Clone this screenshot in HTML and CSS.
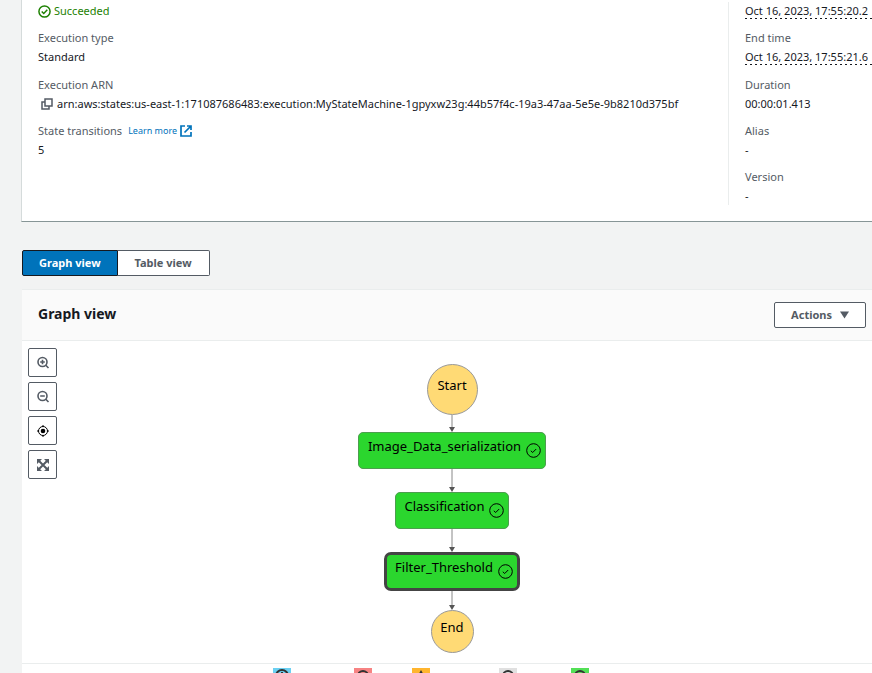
FILE: index.html
```html
<!DOCTYPE html>
<html lang="en">
<head>
<meta charset="utf-8">
<title>Execution details</title>
<link rel="stylesheet" href="styles.css">
</head>
<body>
<svg class="defs" aria-hidden="true">
  <symbol id="check" viewBox="0 0 15 15"><circle cx="7.500" cy="7.500" r="6.800"/><path d="M4.800 7.800l1.900 1.700L10.200 6"/></symbol>
</svg>
<main class="page">
  <section class="details">
    <dl class="column">
      <div class="field"><dd class="status"><svg class="status-icon" viewBox="0 0 14 14"><circle cx="7" cy="7" r="6"/><path d="M4 7l2.200 2.200 3.800-4"/></svg>Succeeded</dd></div>
      <div class="field timed"><dt>Execution type</dt><dd>Standard</dd></div>
      <div class="field"><dt>Execution ARN</dt><dd class="arn"><button class="copy" aria-label="Copy ARN"><svg viewBox="0 0 12 12"><path d="M4 1h7v7H4zM4 4H1v7h7V8"/></svg></button>arn:aws:states:us-east-1:171087686483:execution:MyStateMachine-1gpyxw23g:44b57f4c-19a3-47aa-5e5e-9b8210d375bf</dd></div>
      <div class="field"><dt>State transitions <a class="learn" href="#">Learn more<svg viewBox="0 0 12 12"><path d="M5 1H1v10h10V7M7 1h4v4M11 1L4.500 7.500"/></svg></a></dt><dd>5</dd></div>
    </dl>
    <dl class="column times">
      <div class="field"><dd><span class="dotted">Oct 16, 2023, 17:55:20.2</span></dd></div>
      <div class="field timed"><dt>End time</dt><dd><span class="dotted">Oct 16, 2023, 17:55:21.6</span></dd></div>
      <div class="field"><dt>Duration</dt><dd>00:00:01.413</dd></div>
      <div class="field"><dt>Alias</dt><dd>-</dd></div>
      <div class="field"><dt>Version</dt><dd>-</dd></div>
    </dl>
  </section>

  <div class="views">
    <button class="view active" aria-pressed="true">Graph view</button>
    <button class="view" aria-pressed="false">Table view</button>
  </div>

  <section class="graph-panel">
    <header class="panel-head">
      <h2>Graph view</h2>
      <button class="actions">Actions <svg viewBox="0 0 9 8"><path d="M0 0.500h9L4.500 7.500z"/></svg></button>
    </header>
    <div class="canvas">
      <div class="tools">
        <button aria-label="Zoom in"><svg viewBox="0 0 14 14"><circle cx="6.500" cy="6" r="4.500"/><path d="M9.800 9.200l2.700 2.800M6.500 3.700v4.600M4.200 6h4.600"/></svg></button>
        <button aria-label="Zoom out"><svg viewBox="0 0 14 14"><circle cx="6.500" cy="6" r="4.500"/><path d="M9.800 9.200l2.700 2.800M4.200 6h4.600"/></svg></button>
        <button aria-label="Center" class="center"><svg viewBox="0 0 14 14"><circle cx="7" cy="7" r="4.500"/><circle class="dot" cx="7" cy="7" r="2.300"/><path d="M7 1v2M7 11v2M1 7h2M11 7h2"/></svg></button>
        <button aria-label="Fit to screen" class="fit"><svg viewBox="0 0 14 14"><path d="M2 2l10 10M12 2L2 12"/><path class="solid" d="M1 1h5L1 6zM13 1v5L8 1zM1 13V8l5 5zM13 13H8l5-5z"/></svg></button>
      </div>
      <div class="flow">
        <div class="terminal start">Start</div>
        <svg class="edge short" viewBox="0 0 8 17"><path d="M4 0v12"/><path class="head" d="M1 12h6L4 17z"/></svg>
        <div class="node">Image_Data_serialization<svg><use href="#check"/></svg></div>
        <svg class="edge" viewBox="0 0 8 23"><path d="M4 0v18"/><path class="head" d="M1 18h6l-3 5z"/></svg>
        <div class="node">Classification<svg><use href="#check"/></svg></div>
        <svg class="edge" viewBox="0 0 8 23"><path d="M4 0v18"/><path class="head" d="M1 18h6l-3 5z"/></svg>
        <div class="node selected">Filter_Threshold<svg><use href="#check"/></svg></div>
        <svg class="edge last" viewBox="0 0 8 19"><path d="M4 0v14"/><path class="head" d="M1 14h6l-3 5z"/></svg>
        <div class="terminal end">End</div>
      </div>
    </div>
    <footer class="legend">
      <span><i class="swatch progress"><svg viewBox="0 0 16 16"><circle cx="8" cy="8" r="6"/><path d="M8 4v4h3"/></svg></i>In progress</span>
      <span><i class="swatch failed"><svg viewBox="0 0 16 16"><circle cx="8" cy="8" r="5"/></svg></i>Failed</span>
      <span><i class="swatch caught"><svg viewBox="0 0 16 16"><path d="M8 4l5 9H3z"/></svg></i>Caught error</span>
      <span><i class="swatch canceled"><svg viewBox="0 0 16 16"><circle cx="8" cy="8" r="5"/></svg></i>Canceled</span>
      <span><i class="swatch success"><svg viewBox="0 0 16 16"><circle cx="8" cy="8" r="5"/></svg></i>Succeeded</span>
    </footer>
  </section>
</main>
</body>
</html>
```
FILE: styles.css
```css
* { box-sizing: border-box; }
html, body { height: 100%; overflow: hidden; }
body {
  margin: 0;
  background: #f2f3f3;
  color: #16191f;
  font: 11px/18px "Noto Sans", sans-serif;
}
svg { display: block; fill: none; stroke: currentColor; flex: none; }
button { font: inherit; color: #545b64; cursor: pointer; }
dl, dd, h2 { margin: 0; }
.defs { display: none; }
.page { margin: 0 -10px 0 22px; }

.details {
  display: grid;
  grid-template-columns: 706px 1fr;
  margin-left: -1px;
  padding: 2px 0 16px;
  background: #fff;
  border-left: 1px solid #d5dbdb;
  border-bottom: 1px solid #879596;
}
.column { display: flex; flex-direction: column; gap: 8px; padding-left: 16px; white-space: nowrap; }
.times { border-left: 1px solid #eaeded; }
.field dt { display: flex; gap: 6px; line-height: 20px; color: #545b64; }
.field dd { height: 18px; }
.timed dd { height: 19px; }
.status { display: flex; align-items: center; gap: 3px; color: #1d8102; }
.status-icon { width: 13px; height: 13px; stroke-width: 1.6; }
.dotted {
  display: block;
  height: 17px;
  background: repeating-linear-gradient(90deg, #16191f 0 2px, transparent 2px 5px) bottom / 100% 1px no-repeat;
}
.arn { display: flex; align-items: center; gap: 4px; padding-left: 3px; }
.copy { padding: 0; border: 0; background: none; }
.copy svg { width: 12px; height: 12px; stroke-width: 1.5; }
.learn { display: flex; align-items: center; gap: 3px; font-size: 9px; color: #0073bb; text-decoration: none; }
.learn svg { width: 12px; height: 12px; stroke-width: 1.7; }

.views { display: flex; margin: 28px 0 13px; }
.view, .actions {
  height: 26px;
  padding: 0 16px;
  background: #fff;
  border: 1px solid #545b64;
  border-radius: 2px;
  font-weight: 700;
  line-height: 24px;
}
.view { padding: 0 17px; border-left: 0; border-radius: 0 2px 2px 0; }
.view.active { padding: 0 16px; background: #0073bb; border: 1px solid #16191f; border-radius: 2px 0 0 2px; color: #fff; }

.graph-panel { background: #fff; border-top: 1px solid #eaeded; }
.panel-head {
  display: flex;
  align-items: center;
  justify-content: space-between;
  height: 51px;
  padding: 0 16px;
  background: #fafafa;
  border-bottom: 1px solid #eaeded;
}
.panel-head h2 { font-size: 14px; line-height: 20px; padding-bottom: 2px; }
.actions { display: flex; align-items: center; gap: 8px; }
.actions svg { width: 9px; height: 8px; fill: currentColor; stroke: none; }

.canvas { position: relative; padding: 23px 0 10px; }
.tools { position: absolute; top: 7px; left: 6px; display: grid; gap: 5px; }
.tools button {
  display: grid;
  place-items: center;
  width: 29px;
  height: 29px;
  padding: 0;
  background: #fff;
  border: 1px solid #545b64;
  border-radius: 2px;
}
.tools svg { width: 14px; height: 14px; stroke-width: 1.6; }
.tools .center { color: #000; }
.tools .center svg { stroke-width: 1; }
.tools .fit svg { stroke-width: 2; }
.tools .dot, .tools .solid { fill: currentColor; stroke: none; }

.flow { display: flex; flex-direction: column; align-items: center; font-size: 13px; line-height: 18px; color: #000; }
.terminal { background: #ffda75; border: 1px solid #999; border-radius: 50%; text-align: center; }
.start { width: 51px; height: 51px; padding-top: 11px; }
.end { width: 43px; height: 43px; padding-top: 7px; }
.node {
  display: flex;
  gap: 5px;
  height: 37px;
  padding: 4px 4px 0 9px;
  background: #2bd62e;
  border: 1px solid #4d9e4f;
  border-radius: 5px;
}
.node svg { width: 15px; height: 15px; margin-top: 6px; }
.node.selected { height: 39px; padding: 3px 4px 0 8px; border: 3px solid #444; border-radius: 7px; }
.edge { width: 8px; height: 23px; stroke: #888; }
.edge.short { height: 17px; }
.edge.last { height: 19px; }
.edge .head { fill: #555; stroke: none; }

.legend {
  display: flex;
  justify-content: center;
  gap: 10px;
  padding: 4px 0 0 8px;
  border-top: 1px solid #eaeded;
  font-size: 9px;
  line-height: 22px;
}
.legend span { display: flex; gap: 5px; }
.swatch { width: 18px; height: 18px; color: #333; }
.swatch svg { width: 16px; height: 16px; margin: 0 auto; stroke-width: 2; }
.progress { background: #6bd0f2; }
.failed { background: #f78383; }
.caught { background: #ffb52e; }
.canceled { background: #e0e0e0; }
.success { background: #53e056; }
```
